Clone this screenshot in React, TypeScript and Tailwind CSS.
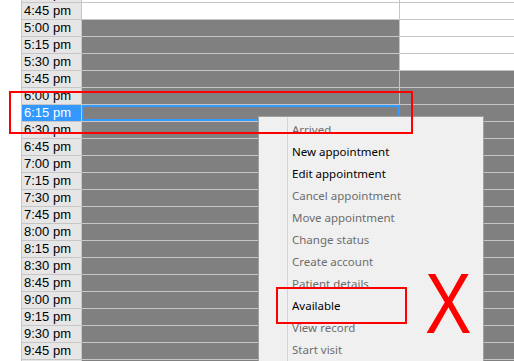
import React from "react";

type Slot = { time: string; a: boolean; b: boolean };

const slots: Slot[] = [
  { time: "4:30 pm", a: false, b: false },
  { time: "4:45 pm", a: false, b: false },
  { time: "5:00 pm", a: true, b: false },
  { time: "5:15 pm", a: true, b: false },
  { time: "5:30 pm", a: true, b: false },
  { time: "5:45 pm", a: true, b: true },
  { time: "6:00 pm", a: true, b: true },
  { time: "6:15 pm", a: true, b: true },
  { time: "6:30 pm", a: true, b: true },
  { time: "6:45 pm", a: true, b: true },
  { time: "7:00 pm", a: true, b: true },
  { time: "7:15 pm", a: true, b: true },
  { time: "7:30 pm", a: true, b: true },
  { time: "7:45 pm", a: true, b: true },
  { time: "8:00 pm", a: true, b: true },
  { time: "8:15 pm", a: true, b: true },
  { time: "8:30 pm", a: true, b: true },
  { time: "8:45 pm", a: true, b: true },
  { time: "9:00 pm", a: true, b: true },
  { time: "9:15 pm", a: true, b: true },
  { time: "9:30 pm", a: true, b: true },
  { time: "9:45 pm", a: true, b: true },
  { time: "10:00 pm", a: true, b: true },
];

const menu = [
  { label: "Arrived", on: false },
  { label: "New appointment", on: true },
  { label: "Edit appointment", on: true },
  { label: "Cancel appointment", on: false },
  { label: "Move appointment", on: false },
  { label: "Change status", on: false },
  { label: "Create account", on: false },
  { label: "Patient details", on: false },
  { label: "Available", on: true },
  { label: "View record", on: false },
  { label: "Start visit", on: false },
];

export default function App() {
  return (
    <div className="relative h-[361px] w-[514px] overflow-hidden bg-white font-['Liberation_Sans',Arial,sans-serif]">
      {/* SCHEDULE GRID */}
      <div className="-mt-[14px] ml-[21px] flex flex-col">
        {slots.map((s) => {
          const selected = s.time === "6:15 pm";
          return (
            <div key={s.time} className="flex h-[17px] border-b border-[#c6c6c6]">
              <div
                className={
                  selected
                    ? "w-[61px] shrink-0 border-x border-[#c6c6c6] bg-[#3399ff] pl-[2px] text-[13px] leading-[16px] text-white"
                    : "w-[61px] shrink-0 border-x border-[#c6c6c6] bg-[#e6e6e6] pl-[2px] text-[13px] leading-[16px] text-black"
                }
              >
                {s.time}
              </div>
              <div
                className={
                  selected
                    ? "w-[318px] shrink-0 border-2 border-[#3399ff] bg-[#808080]"
                    : s.a
                    ? "w-[318px] shrink-0 border-r border-[#c6c6c6] bg-[#808080]"
                    : "w-[318px] shrink-0 border-r border-[#c6c6c6] bg-white"
                }
              />
              <div className={s.b ? "flex-1 bg-[#808080]" : "flex-1 bg-white"} />
            </div>
          );
        })}
      </div>

      {/* CONTEXT MENU */}
      <div className="absolute left-[258px] top-[116px] h-[260px] w-[226px] border border-[#a0a0a0] bg-[#f0f0f0] py-[2px] font-['Noto_Sans',sans-serif] text-[11.5px]">
        <div className="absolute bottom-0 left-[28px] top-0 w-px bg-[#d4d4d4]" />
        {menu.map((m) => (
          <div
            key={m.label}
            className={
              m.on
                ? "flex h-[22px] items-center pl-[33px] text-black"
                : "flex h-[22px] items-center pl-[33px] text-[#6d6d6d]"
            }
          >
            {m.label}
          </div>
        ))}
      </div>

      {/* ANNOTATIONS */}
      <div className="absolute left-[9px] top-[91px] h-[43px] w-[404px] border-2 border-[#ff0000]" />
      <div className="absolute left-[276px] top-[287px] h-[37px] w-[131px] border-2 border-[#ff0000]" />
      <div className="absolute left-[420px] top-[261px] w-[56px] scale-x-[0.82] text-center font-['Liberation_Sans',sans-serif] text-[85px] leading-none text-[#ff0000]">
        X
      </div>
    </div>
  );
}
